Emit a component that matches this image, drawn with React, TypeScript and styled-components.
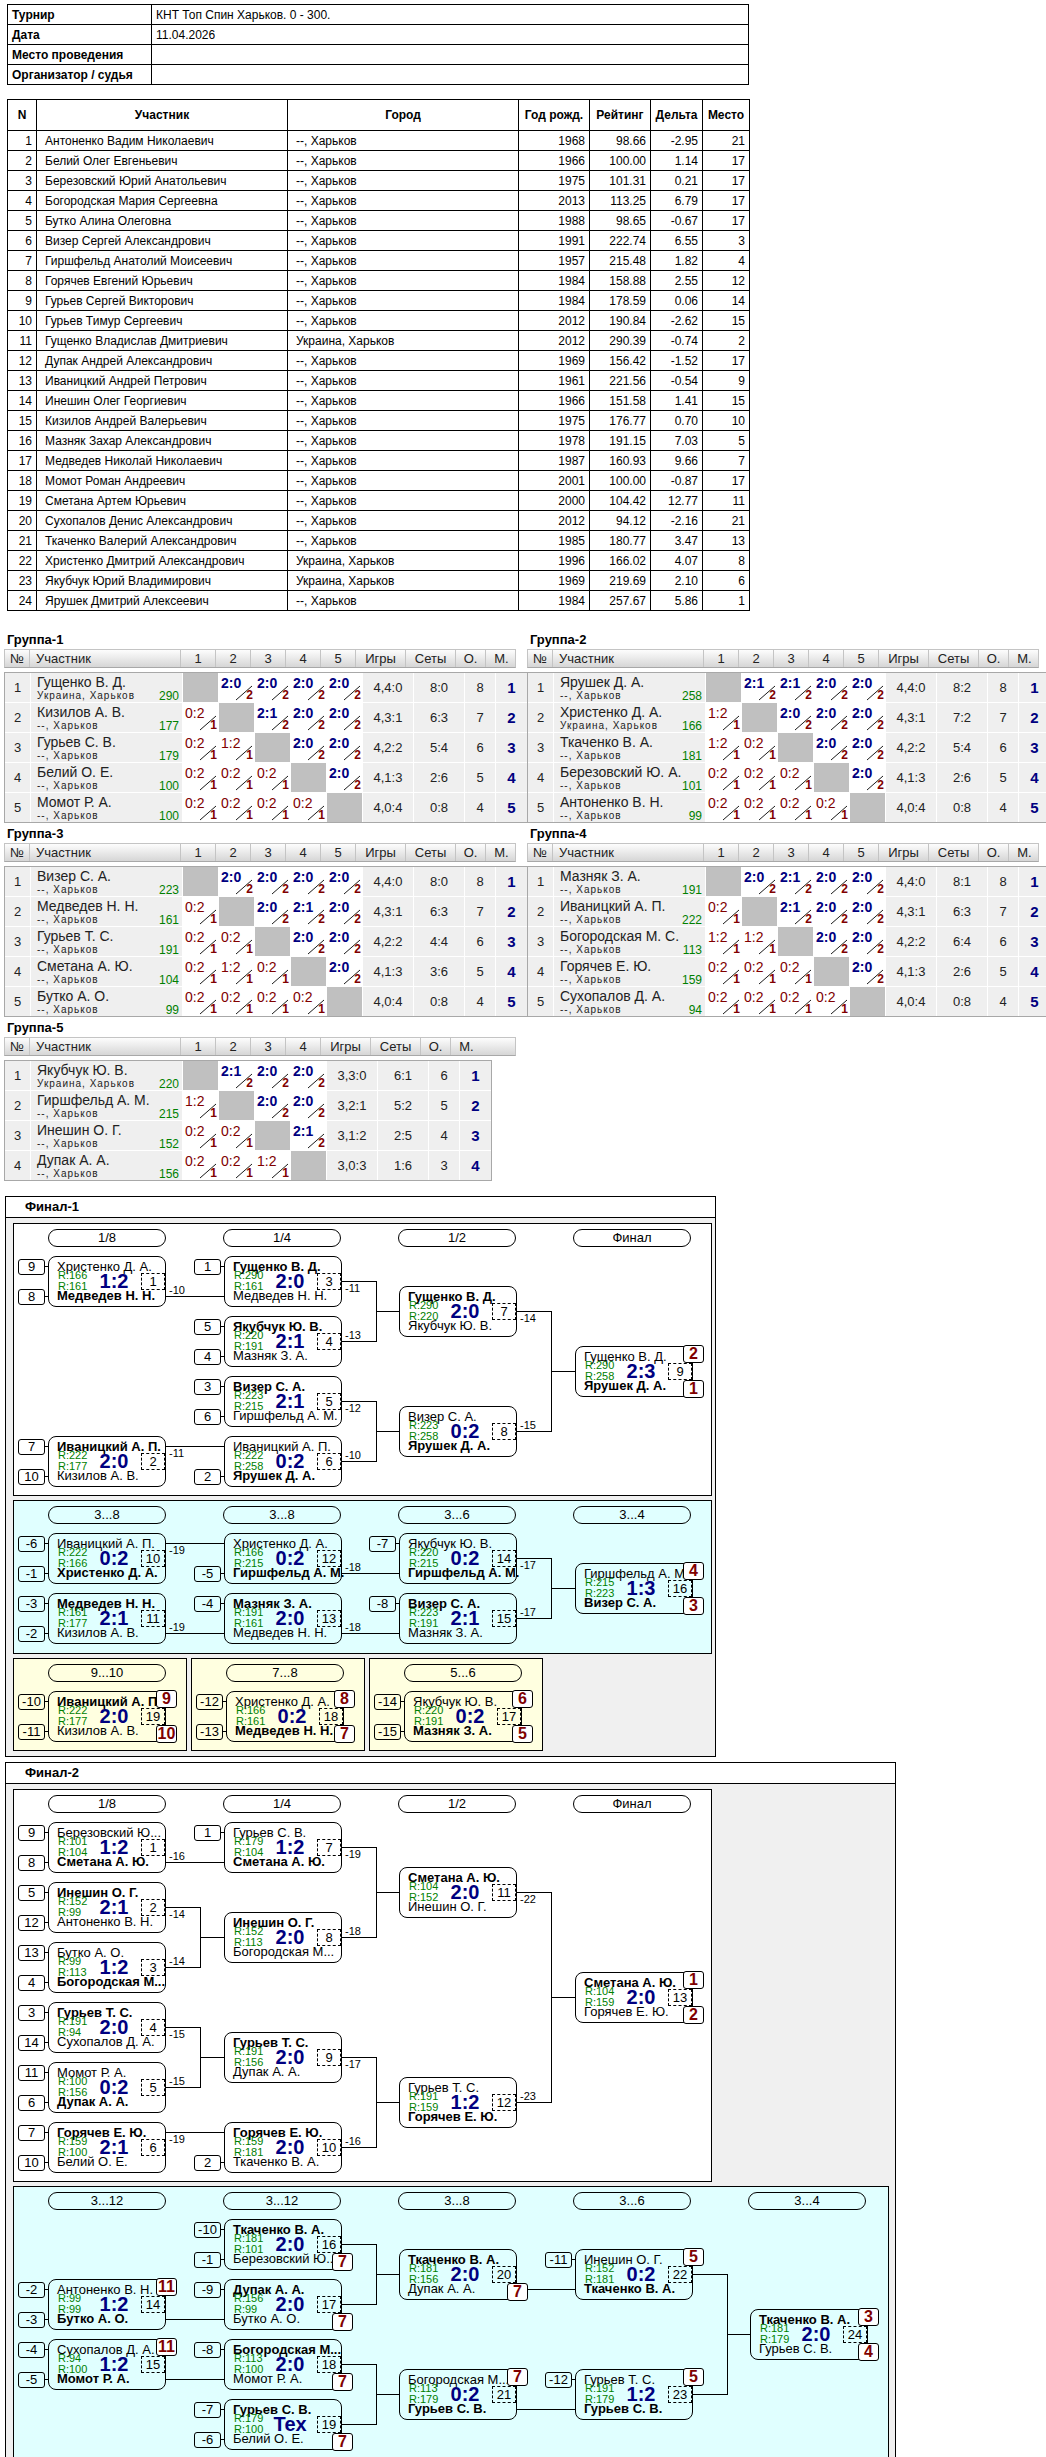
import React from 'react';
import styled, { createGlobalStyle } from 'styled-components';

const GlobalStyle = createGlobalStyle`
  body {
    margin: 0;
    background: #fff;
    font-family: 'Liberation Sans', Arial, sans-serif;
    color: #000;
  }
`;

const Page = styled.div`
  width: 1046px;
  padding: 4px 0 6px 4px;
  box-sizing: border-box;
`;

/* ---------- info + participants ---------- */

const Sheet = styled.table`
  margin-left: 3px;
  width: 742px;
  border-collapse: collapse;
  font-size: 12px;
  table-layout: fixed;
  td,
  th {
    border: 1px solid #000;
    padding: 0 4px;
    height: 19px;
    white-space: nowrap;
    overflow: hidden;
  }
`;
const InfoLabel = styled.td`
  font-weight: bold;
  width: 135px;
`;
const Participants = styled(Sheet)`
  margin-top: 14px;
  th {
    height: 30px;
    font-weight: bold;
    text-align: center;
  }
`;
const Cell = styled.td<{ $right?: boolean }>`
  text-align: ${(p) => (p.$right ? 'right' : 'left')};
  && {
    padding-left: ${(p) => (p.$right ? '4px' : '8px')};
  }
`;

const players: [string, string, string, string, string, string][] = [
  ['Антоненко Вадим Николаевич', '--, Харьков', '1968', '98.66', '-2.95', '21'],
  ['Белий Олег Евгеньевич', '--, Харьков', '1966', '100.00', '1.14', '17'],
  ['Березовский Юрий Анатольевич', '--, Харьков', '1975', '101.31', '0.21', '17'],
  ['Богородская Мария Сергеевна', '--, Харьков', '2013', '113.25', '6.79', '17'],
  ['Бутко Алина Олеговна', '--, Харьков', '1988', '98.65', '-0.67', '17'],
  ['Визер Сергей Александрович', '--, Харьков', '1991', '222.74', '6.55', '3'],
  ['Гиршфельд Анатолий Моисеевич', '--, Харьков', '1957', '215.48', '1.82', '4'],
  ['Горячев Евгений Юрьевич', '--, Харьков', '1984', '158.88', '2.55', '12'],
  ['Гурьев Сергей Викторович', '--, Харьков', '1984', '178.59', '0.06', '14'],
  ['Гурьев Тимур Сергеевич', '--, Харьков', '2012', '190.84', '-2.62', '15'],
  ['Гущенко Владислав Дмитриевич', 'Украина, Харьков', '2012', '290.39', '-0.74', '2'],
  ['Дупак Андрей Александрович', '--, Харьков', '1969', '156.42', '-1.52', '17'],
  ['Иваницкий Андрей Петрович', '--, Харьков', '1961', '221.56', '-0.54', '9'],
  ['Инешин Олег Георгиевич', '--, Харьков', '1966', '151.58', '1.41', '15'],
  ['Кизилов Андрей Валерьевич', '--, Харьков', '1975', '176.77', '0.70', '10'],
  ['Мазняк Захар Александрович', '--, Харьков', '1978', '191.15', '7.03', '5'],
  ['Медведев Николай Николаевич', '--, Харьков', '1987', '160.93', '9.66', '7'],
  ['Момот Роман Андреевич', '--, Харьков', '2001', '100.00', '-0.87', '17'],
  ['Сметана Артем Юрьевич', '--, Харьков', '2000', '104.42', '12.77', '11'],
  ['Сухопалов Денис Александрович', '--, Харьков', '2012', '94.12', '-2.16', '21'],
  ['Ткаченко Валерий Александрович', '--, Харьков', '1985', '180.77', '3.47', '13'],
  ['Христенко Дмитрий Александрович', 'Украина, Харьков', '1996', '166.02', '4.07', '8'],
  ['Якубчук Юрий Владимирович', 'Украина, Харьков', '1969', '219.69', '2.10', '6'],
  ['Ярушек Дмитрий Алексеевич', '--, Харьков', '1984', '257.67', '5.86', '1'],
];

/* ---------- groups ---------- */

const Groups = styled.div`
  margin-top: 20px;
  display: grid;
  grid-template-columns: 512px 512px;
  column-gap: 11px;
`;
const GroupBlock = styled.div`
  margin-bottom: 2px;
`;
const GroupTitle = styled.div`
  font-weight: bold;
  font-size: 13px;
  height: 18px;
  line-height: 18px;
  padding-left: 3px;
`;
const cols = (n: number) => `25px 151px repeat(${n}, 35px) 50px 50px 30px 31px`;
const GHead = styled.div<{ $n: number }>`
  display: grid;
  grid-template-columns: ${(p) => cols(p.$n)};
  height: 19px;
  margin-bottom: 4px;
  background: linear-gradient(#fdfdfd, #d6d6d6);
  border: 1px solid #c4c4c4;
  border-bottom-color: #a8a8a8;
  box-sizing: border-box;
  font-size: 13px;
  color: #222;
  & > div {
    border-right: 1px solid #c4c4c4;
    text-align: center;
    line-height: 17px;
  }
  & > div:nth-child(2) {
    text-align: left;
    padding-left: 6px;
  }
  & > div:last-child {
    border-right: none;
  }
`;
const GBody = styled.div<{ $n: number }>`
  display: grid;
  grid-template-columns: ${(p) => cols(p.$n)};
  grid-auto-rows: 29px;
  gap: 1px;
  background: #fff;
  border: 1px solid #a8a8a8;
  width: fit-content;
  font-size: 13px;
  color: #222;
`;
const GCell = styled.div`
  background: #efefef;
  display: flex;
  align-items: center;
  justify-content: center;
`;
const Place = styled(GCell)`
  color: #000080;
  font-weight: bold;
  font-size: 15px;
`;
const NameCell = styled.div`
  background: #efefef;
  display: grid;
  grid-template-columns: 1fr auto;
  grid-template-rows: 16px 12px;
  padding: 1px 3px 0 6px;
`;
const GName = styled.div`
  grid-column: 1 / 3;
  font-size: 14px;
  line-height: 16px;
  white-space: nowrap;
`;
const GCity = styled.div`
  font-size: 10px;
  letter-spacing: 1px;
  line-height: 12px;
  white-space: nowrap;
`;
const GRating = styled.div`
  font-size: 12px;
  line-height: 12px;
  color: #008000;
`;
const Diag = styled.div`
  background: #c0c0c0;
`;
const ScoreCell = styled.div`
  background: #fff;
  position: relative;
`;
const ScoreText = styled.span<{ $win: boolean }>`
  position: absolute;
  left: 2px;
  top: 2px;
  font-size: 14px;
  font-weight: ${(p) => (p.$win ? 'bold' : 'normal')};
  color: ${(p) => (p.$win ? '#000080' : '#800000')};
`;
const Points = styled.span`
  position: absolute;
  right: 1px;
  bottom: 0;
  font-size: 12px;
  font-weight: bold;
  color: #800000;
`;
const Slash = styled.svg`
  position: absolute;
  left: 0;
  top: 0;
`;

type GRow = [string, string, number, (string | null)[], string, string, number, number];
type Group = { title: string; rows: GRow[] };

const U = 'Украина, Харьков';
const K = '--, Харьков';
const g1: Group = {
  title: 'Группа-1',
  rows: [
    ['Гущенко В. Д.', U, 290, [null, '2:0', '2:0', '2:0', '2:0'], '4,4:0', '8:0', 8, 1],
    ['Кизилов А. В.', K, 177, ['0:2', null, '2:1', '2:0', '2:0'], '4,3:1', '6:3', 7, 2],
    ['Гурьев С. В.', K, 179, ['0:2', '1:2', null, '2:0', '2:0'], '4,2:2', '5:4', 6, 3],
    ['Белий О. Е.', K, 100, ['0:2', '0:2', '0:2', null, '2:0'], '4,1:3', '2:6', 5, 4],
    ['Момот Р. А.', K, 100, ['0:2', '0:2', '0:2', '0:2', null], '4,0:4', '0:8', 4, 5],
  ],
};
const g2: Group = {
  title: 'Группа-2',
  rows: [
    ['Ярушек Д. А.', K, 258, [null, '2:1', '2:1', '2:0', '2:0'], '4,4:0', '8:2', 8, 1],
    ['Христенко Д. А.', U, 166, ['1:2', null, '2:0', '2:0', '2:0'], '4,3:1', '7:2', 7, 2],
    ['Ткаченко В. А.', K, 181, ['1:2', '0:2', null, '2:0', '2:0'], '4,2:2', '5:4', 6, 3],
    ['Березовский Ю. А.', K, 101, ['0:2', '0:2', '0:2', null, '2:0'], '4,1:3', '2:6', 5, 4],
    ['Антоненко В. Н.', K, 99, ['0:2', '0:2', '0:2', '0:2', null], '4,0:4', '0:8', 4, 5],
  ],
};
const g3: Group = {
  title: 'Группа-3',
  rows: [
    ['Визер С. А.', K, 223, [null, '2:0', '2:0', '2:0', '2:0'], '4,4:0', '8:0', 8, 1],
    ['Медведев Н. Н.', K, 161, ['0:2', null, '2:0', '2:1', '2:0'], '4,3:1', '6:3', 7, 2],
    ['Гурьев Т. С.', K, 191, ['0:2', '0:2', null, '2:0', '2:0'], '4,2:2', '4:4', 6, 3],
    ['Сметана А. Ю.', K, 104, ['0:2', '1:2', '0:2', null, '2:0'], '4,1:3', '3:6', 5, 4],
    ['Бутко А. О.', K, 99, ['0:2', '0:2', '0:2', '0:2', null], '4,0:4', '0:8', 4, 5],
  ],
};
const g4: Group = {
  title: 'Группа-4',
  rows: [
    ['Мазняк З. А.', K, 191, [null, '2:0', '2:1', '2:0', '2:0'], '4,4:0', '8:1', 8, 1],
    ['Иваницкий А. П.', K, 222, ['0:2', null, '2:1', '2:0', '2:0'], '4,3:1', '6:3', 7, 2],
    ['Богородская М. С.', K, 113, ['1:2', '1:2', null, '2:0', '2:0'], '4,2:2', '6:4', 6, 3],
    ['Горячев Е. Ю.', K, 159, ['0:2', '0:2', '0:2', null, '2:0'], '4,1:3', '2:6', 5, 4],
    ['Сухопалов Д. А.', K, 94, ['0:2', '0:2', '0:2', '0:2', null], '4,0:4', '0:8', 4, 5],
  ],
};
const g5: Group = {
  title: 'Группа-5',
  rows: [
    ['Якубчук Ю. В.', U, 220, [null, '2:1', '2:0', '2:0'], '3,3:0', '6:1', 6, 1],
    ['Гиршфельд А. М.', K, 215, ['1:2', null, '2:0', '2:0'], '3,2:1', '5:2', 5, 2],
    ['Инешин О. Г.', K, 152, ['0:2', '0:2', null, '2:1'], '3,1:2', '2:5', 4, 3],
    ['Дупак А. А.', K, 156, ['0:2', '0:2', '1:2', null], '3,0:3', '1:6', 3, 4],
  ],
};

function GroupTable({ g }: { g: Group }) {
  const n = g.rows.length;
  return (
    <GroupBlock>
      <GroupTitle>{g.title}</GroupTitle>
      <GHead $n={n}>
        <div>№</div>
        <div>Участник</div>
        {g.rows.map((_, i) => (
          <div key={i}>{i + 1}</div>
        ))}
        <div>Игры</div>
        <div>Сеты</div>
        <div>О.</div>
        <div>М.</div>
      </GHead>
      <GBody $n={n}>
        {g.rows.map((r, i) => (
          <React.Fragment key={i}>
            <GCell>{i + 1}</GCell>
            <NameCell>
              <GName>{r[0]}</GName>
              <GCity>{r[1]}</GCity>
              <GRating>{r[2]}</GRating>
            </NameCell>
            {r[3].map((s, j) => {
              if (!s) return <Diag key={j} />;
              const [a, b] = s.split(':').map(Number);
              const win = a > b;
              return (
                <ScoreCell key={j}>
                  <Slash width="35" height="29">
                    <line x1="17" y1="27" x2="33" y2="13" stroke="#000" strokeWidth="0.9" />
                  </Slash>
                  <ScoreText $win={win}>{s}</ScoreText>
                  <Points>{win ? 2 : 1}</Points>
                </ScoreCell>
              );
            })}
            <GCell>{r[4]}</GCell>
            <GCell>{r[5]}</GCell>
            <GCell>{r[6]}</GCell>
            <Place>{r[7]}</Place>
          </React.Fragment>
        ))}
      </GBody>
    </GroupBlock>
  );
}

/* ---------- brackets ---------- */

type P = { n: string; r: number; b?: boolean };
type M = {
  c: number;
  y: number;
  t: P;
  d: P;
  s: string;
  no: number;
  lbl?: string;
  seeds?: [string, string];
  badges?: [string, string];
  to?: number;
  lv?: number;
};

const colX = (c: number) => 34 + Math.round(175.5 * c);

const FinalBox = styled.div<{ $w: number }>`
  margin-top: 13px;
  margin-left: 1px;
  width: ${(p) => p.$w}px;
  border: 1px solid #000;
  background: #f0f0f0;
  & + & {
    margin-top: 5px;
  }
`;
const FinalHead = styled.div`
  height: 20px;
  line-height: 20px;
  background: #fff;
  border-bottom: 1px solid #000;
  padding-left: 19px;
  font-weight: bold;
  font-size: 13px;
`;
const FinalBody = styled.div`
  padding: 5px 7px 5px 7px;
  display: flex;
  flex-direction: column;
  gap: 4px;
`;
const PanelRow = styled.div`
  display: flex;
  gap: 4px;
`;
const Panel = styled.div<{ $bg: string; $w: number; $h: number }>`
  position: relative;
  width: ${(p) => p.$w}px;
  height: ${(p) => p.$h}px;
  background: ${(p) => p.$bg};
  border: 1px solid #000;
  flex: none;
`;
const Pills = styled.div`
  display: flex;
  gap: 57px;
  padding: 5px 0 0 34px;
`;
const Pill = styled.div`
  width: 118px;
  height: 18px;
  box-sizing: border-box;
  border: 1px solid #000;
  border-radius: 9px;
  font-size: 13px;
  line-height: 16px;
  text-align: center;
`;
const Lines = styled.svg`
  position: absolute;
  left: 0;
  top: 0;
  pointer-events: none;
`;
const Node = styled.div<{ $x: number; $y: number }>`
  position: absolute;
  left: ${(p) => p.$x}px;
  top: ${(p) => p.$y}px;
  width: 118px;
  height: 51px;
  box-sizing: border-box;
  border: 1px solid #000;
  border-radius: 8px;
  font-size: 13px;
`;
const NName = styled.div<{ $b?: boolean; $top?: boolean }>`
  font-weight: ${(p) => (p.$b ? 'bold' : 'normal')};
  line-height: 14px;
  padding: ${(p) => (p.$top ? '3px' : '0')} 0 0 8px;
  margin-top: ${(p) => (p.$top ? '0' : '-3px')};
  white-space: nowrap;
`;
const NMid = styled.div`
  display: flex;
  align-items: center;
  margin-top: -4px;
  padding-left: 9px;
  height: 22px;
`;
const RCol = styled.div`
  width: 38px;
  font-size: 11px;
  line-height: 11px;
  color: #008000;
`;
const NScore = styled.div`
  width: 36px;
  text-align: center;
  font-size: 20px;
  font-weight: bold;
  color: #000080;
`;
const MatchNo = styled.div`
  position: absolute;
  left: 92px;
  top: 16px;
  width: 24px;
  height: 17px;
  box-sizing: border-box;
  border: 1px dashed #000;
  text-align: center;
  line-height: 15px;
  font-size: 13px;
`;
const Seed = styled.div<{ $bottom?: boolean }>`
  position: absolute;
  left: -31px;
  top: ${(p) => (p.$bottom ? '32px' : '2px')};
  width: 27px;
  height: 16px;
  box-sizing: border-box;
  border: 1px solid #000;
  border-radius: 3px;
  text-align: center;
  line-height: 14px;
  font-size: 13px;
  &::after {
    content: '';
    position: absolute;
    right: -5px;
    top: 6px;
    width: 4px;
    border-top: 1px solid #000;
  }
`;
const Badge = styled.div<{ $bottom?: boolean }>`
  position: absolute;
  left: 107px;
  top: ${(p) => (p.$bottom ? '33px' : '-2px')};
  width: 21px;
  height: 18px;
  box-sizing: border-box;
  border: 1px solid #000;
  border-radius: 3px;
  background: #fff;
  color: #800000;
  font-weight: bold;
  font-size: 16px;
  line-height: 16px;
  text-align: center;
`;
const Lbl = styled.div<{ $x: number; $y: number }>`
  position: absolute;
  left: ${(p) => p.$x}px;
  top: ${(p) => p.$y}px;
  font-size: 11px;
  line-height: 14px;
`;

function Match({ m }: { m: M }) {
  return (
    <Node $x={colX(m.c)} $y={32 + m.y}>
      {m.seeds?.[0] && <Seed>{m.seeds[0]}</Seed>}
      {m.seeds?.[1] && <Seed $bottom>{m.seeds[1]}</Seed>}
      <NName $top $b={m.t.b}>
        {m.t.n}
      </NName>
      <NMid>
        <RCol>
          R:{m.t.r}
          <br />
          R:{m.d.r}
        </RCol>
        <NScore>{m.s}</NScore>
      </NMid>
      <NName $b={m.d.b}>{m.d.n}</NName>
      <MatchNo>{m.no}</MatchNo>
      {m.badges?.[0] && <Badge>{m.badges[0]}</Badge>}
      {m.badges?.[1] && <Badge $bottom>{m.badges[1]}</Badge>}
    </Node>
  );
}

function Bracket({ pills, ms, bg, w, h }: { pills: string[]; ms: M[]; bg: string; w: number; h: number }) {
  const segs: string[] = [];
  const lbls: { x: number; y: number; t: string }[] = [];
  ms.forEach((t, ti) => {
    const f = ms.filter((m) => m.to === ti);
    const tx = colX(t.c);
    if (f.length === 1) {
      const m = f[0];
      const y = 32 + m.y + (m.lv ?? 40) + 0.5;
      segs.push(`M${colX(m.c) + 118} ${y}H${tx}`);
      if (m.lbl) lbls.push({ x: colX(m.c) + 121, y: 32 + m.y + (m.lv === 10 ? 17 : 34) - 7, t: m.lbl });
    } else if (f.length === 2) {
      const xm = colX(f[0].c) + 118 + 34 + 0.5;
      const ys = f.map((m) => 32 + m.y + 25 + 0.5);
      f.forEach((m, i) => {
        segs.push(`M${colX(m.c) + 118} ${ys[i]}H${xm}`);
        if (m.lbl) lbls.push({ x: colX(m.c) + 121, y: 32 + m.y + (i === 0 ? 32 : 19) - 7, t: m.lbl });
      });
      segs.push(`M${xm} ${ys[0]}V${ys[1]}M${xm} ${32 + t.y + 25.5}H${tx}`);
    }
  });
  return (
    <Panel $bg={bg} $w={w} $h={h}>
      <Pills>
        {pills.map((p, i) => (
          <Pill key={i}>{p}</Pill>
        ))}
      </Pills>
      <Lines width={w - 2} height={h - 2}>
        <path d={segs.join('')} stroke="#000" strokeWidth="1" fill="none" shapeRendering="crispEdges" />
      </Lines>
      {lbls.map((l, i) => (
        <Lbl key={i} $x={l.x} $y={l.y}>
          {l.t}
        </Lbl>
      ))}
      {ms.map((m, i) => (
        <Match key={i} m={m} />
      ))}
    </Panel>
  );
}

const p = (n: string, r: number, b?: boolean): P => ({ n, r, b });

const f1main: M[] = [
  { c: 0, y: 0, seeds: ['9', '8'], t: p('Христенко Д. А.', 166), d: p('Медведев Н. Н.', 161, true), s: '1:2', no: 1, lbl: '-10', to: 2, lv: 40 },
  { c: 0, y: 180, seeds: ['7', '10'], t: p('Иваницкий А. П.', 222, true), d: p('Кизилов А. В.', 177), s: '2:0', no: 2, lbl: '-11', to: 5, lv: 10 },
  { c: 1, y: 0, seeds: ['1', ''], t: p('Гущенко В. Д.', 290, true), d: p('Медведев Н. Н.', 161), s: '2:0', no: 3, lbl: '-11', to: 6 },
  { c: 1, y: 60, seeds: ['5', '4'], t: p('Якубчук Ю. В.', 220, true), d: p('Мазняк З. А.', 191), s: '2:1', no: 4, lbl: '-13', to: 6 },
  { c: 1, y: 120, seeds: ['3', '6'], t: p('Визер С. А.', 223, true), d: p('Гиршфельд А. М.', 215), s: '2:1', no: 5, lbl: '-12', to: 7 },
  { c: 1, y: 180, seeds: ['', '2'], t: p('Иваницкий А. П.', 222), d: p('Ярушек Д. А.', 258, true), s: '0:2', no: 6, lbl: '-10', to: 7 },
  { c: 2, y: 30, t: p('Гущенко В. Д.', 290, true), d: p('Якубчук Ю. В.', 220), s: '2:0', no: 7, lbl: '-14', to: 8 },
  { c: 2, y: 150, t: p('Визер С. А.', 223), d: p('Ярушек Д. А.', 258, true), s: '0:2', no: 8, lbl: '-15', to: 8 },
  { c: 3, y: 90, t: p('Гущенко В. Д.', 290), d: p('Ярушек Д. А.', 258, true), s: '2:3', no: 9, badges: ['2', '1'] },
];
const f1cons: M[] = [
  { c: 0, y: 0, seeds: ['-6', '-1'], t: p('Иваницкий А. П.', 222), d: p('Христенко Д. А.', 166, true), s: '0:2', no: 10, lbl: '-19', to: 2, lv: 10 },
  { c: 0, y: 60, seeds: ['-3', '-2'], t: p('Медведев Н. Н.', 161, true), d: p('Кизилов А. В.', 177), s: '2:1', no: 11, lbl: '-19', to: 3, lv: 40 },
  { c: 1, y: 0, seeds: ['', '-5'], t: p('Христенко Д. А.', 166), d: p('Гиршфельд А. М.', 215, true), s: '0:2', no: 12, lbl: '-18', to: 4, lv: 40 },
  { c: 1, y: 60, seeds: ['-4', ''], t: p('Мазняк З. А.', 191, true), d: p('Медведев Н. Н.', 161), s: '2:0', no: 13, lbl: '-18', to: 5, lv: 40 },
  { c: 2, y: 0, seeds: ['-7', ''], t: p('Якубчук Ю. В.', 220), d: p('Гиршфельд А. М.', 215, true), s: '0:2', no: 14, lbl: '-17', to: 6 },
  { c: 2, y: 60, seeds: ['-8', ''], t: p('Визер С. А.', 223, true), d: p('Мазняк З. А.', 191), s: '2:1', no: 15, lbl: '-17', to: 6 },
  { c: 3, y: 30, t: p('Гиршфельд А. М.', 215), d: p('Визер С. А.', 223, true), s: '1:3', no: 16, badges: ['4', '3'] },
];
const f1small: { title: string; m: M }[] = [
  { title: '9...10', m: { c: 0, y: 0, seeds: ['-10', '-11'], t: p('Иваницкий А. П.', 222, true), d: p('Кизилов А. В.', 177), s: '2:0', no: 19, badges: ['9', '10'] } },
  { title: '7...8', m: { c: 0, y: 0, seeds: ['-12', '-13'], t: p('Христенко Д. А.', 166), d: p('Медведев Н. Н.', 161, true), s: '0:2', no: 18, badges: ['8', '7'] } },
  { title: '5...6', m: { c: 0, y: 0, seeds: ['-14', '-15'], t: p('Якубчук Ю. В.', 220), d: p('Мазняк З. А.', 191, true), s: '0:2', no: 17, badges: ['6', '5'] } },
];
const f2main: M[] = [
  { c: 0, y: 0, seeds: ['9', '8'], t: p('Березовский Ю...', 101), d: p('Сметана А. Ю.', 104, true), s: '1:2', no: 1, lbl: '-16', to: 6, lv: 40 },
  { c: 0, y: 60, seeds: ['5', '12'], t: p('Инешин О. Г.', 152, true), d: p('Антоненко В. Н.', 99), s: '2:1', no: 2, lbl: '-14', to: 7 },
  { c: 0, y: 120, seeds: ['13', '4'], t: p('Бутко А. О.', 99), d: p('Богородская М...', 113, true), s: '1:2', no: 3, lbl: '-14', to: 7 },
  { c: 0, y: 180, seeds: ['3', '14'], t: p('Гурьев Т. С.', 191, true), d: p('Сухопалов Д. А.', 94), s: '2:0', no: 4, lbl: '-15', to: 8 },
  { c: 0, y: 240, seeds: ['11', '6'], t: p('Момот Р. А.', 100), d: p('Дупак А. А.', 156, true), s: '0:2', no: 5, lbl: '-15', to: 8 },
  { c: 0, y: 300, seeds: ['7', '10'], t: p('Горячев Е. Ю.', 159, true), d: p('Белий О. Е.', 100), s: '2:1', no: 6, lbl: '-19', to: 9, lv: 10 },
  { c: 1, y: 0, seeds: ['1', ''], t: p('Гурьев С. В.', 179), d: p('Сметана А. Ю.', 104, true), s: '1:2', no: 7, lbl: '-19', to: 10 },
  { c: 1, y: 90, t: p('Инешин О. Г.', 152, true), d: p('Богородская М...', 113), s: '2:0', no: 8, lbl: '-18', to: 10 },
  { c: 1, y: 210, t: p('Гурьев Т. С.', 191, true), d: p('Дупак А. А.', 156), s: '2:0', no: 9, lbl: '-17', to: 11 },
  { c: 1, y: 300, seeds: ['', '2'], t: p('Горячев Е. Ю.', 159, true), d: p('Ткаченко В. А.', 181), s: '2:0', no: 10, lbl: '-16', to: 11 },
  { c: 2, y: 45, t: p('Сметана А. Ю.', 104, true), d: p('Инешин О. Г.', 152), s: '2:0', no: 11, lbl: '-22', to: 12 },
  { c: 2, y: 255, t: p('Гурьев Т. С.', 191), d: p('Горячев Е. Ю.', 159, true), s: '1:2', no: 12, lbl: '-23', to: 12 },
  { c: 3, y: 150, t: p('Сметана А. Ю.', 104, true), d: p('Горячев Е. Ю.', 159), s: '2:0', no: 13, badges: ['1', '2'] },
];
const f2cons: M[] = [
  { c: 0, y: 60, seeds: ['-2', '-3'], t: p('Антоненко В. Н.', 99), d: p('Бутко А. О.', 99, true), s: '1:2', no: 14, badges: ['11', ''], to: 3, lv: 40 },
  { c: 0, y: 120, seeds: ['-4', '-5'], t: p('Сухопалов Д. А.', 94), d: p('Момот Р. А.', 100, true), s: '1:2', no: 15, badges: ['11', ''], to: 4, lv: 40 },
  { c: 1, y: 0, seeds: ['-10', '-1'], t: p('Ткаченко В. А.', 181, true), d: p('Березовский Ю...', 101), s: '2:0', no: 16, badges: ['', '7'], to: 6 },
  { c: 1, y: 60, seeds: ['-9', ''], t: p('Дупак А. А.', 156, true), d: p('Бутко А. О.', 99), s: '2:0', no: 17, badges: ['', '7'], to: 6 },
  { c: 1, y: 120, seeds: ['-8', ''], t: p('Богородская М...', 113, true), d: p('Момот Р. А.', 100), s: '2:0', no: 18, badges: ['', '7'], to: 7 },
  { c: 1, y: 180, seeds: ['-7', '-6'], t: p('Гурьев С. В.', 179, true), d: p('Белий О. Е.', 100), s: 'Тех', no: 19, badges: ['', '7'], to: 7 },
  { c: 2, y: 30, t: p('Ткаченко В. А.', 181, true), d: p('Дупак А. А.', 156), s: '2:0', no: 20, badges: ['', '7'], to: 8, lv: 40 },
  { c: 2, y: 150, t: p('Богородская М...', 113), d: p('Гурьев С. В.', 179, true), s: '0:2', no: 21, badges: ['7', ''], to: 9, lv: 40 },
  { c: 3, y: 30, seeds: ['-11', ''], t: p('Инешин О. Г.', 152), d: p('Ткаченко В. А.', 181, true), s: '0:2', no: 22, badges: ['5', ''], to: 10 },
  { c: 3, y: 150, seeds: ['-12', ''], t: p('Гурьев Т. С.', 191), d: p('Гурьев С. В.', 179, true), s: '1:2', no: 23, badges: ['5', ''], to: 10 },
  { c: 4, y: 90, t: p('Ткаченко В. А.', 181, true), d: p('Гурьев С. В.', 179), s: '2:0', no: 24, badges: ['3', '4'] },
];

const WHITE = '#fff';
const CYAN = '#e0ffff';
const YELLOW = '#ffffe0';

export default function App() {
  return (
    <Page>
      <GlobalStyle />
      <Sheet>
        <tbody>
          <tr>
            <InfoLabel>Турнир</InfoLabel>
            <td>КНТ Топ Спин Харьков. 0 - 300.</td>
          </tr>
          <tr>
            <InfoLabel>Дата</InfoLabel>
            <td>11.04.2026</td>
          </tr>
          <tr>
            <InfoLabel>Место проведения</InfoLabel>
            <td></td>
          </tr>
          <tr>
            <InfoLabel>Организатор / судья</InfoLabel>
            <td></td>
          </tr>
        </tbody>
      </Sheet>
      <Participants>
        <colgroup>
          <col style={{ width: 29 }} />
          <col style={{ width: 251 }} />
          <col style={{ width: 231 }} />
          <col style={{ width: 71 }} />
          <col style={{ width: 61 }} />
          <col style={{ width: 52 }} />
          <col style={{ width: 47 }} />
        </colgroup>
        <thead>
          <tr>
            <th>N</th>
            <th>Участник</th>
            <th>Город</th>
            <th>Год рожд.</th>
            <th>Рейтинг</th>
            <th>Дельта</th>
            <th>Место</th>
          </tr>
        </thead>
        <tbody>
          {players.map((r, i) => (
            <tr key={i}>
              <Cell $right>{i + 1}</Cell>
              <Cell>{r[0]}</Cell>
              <Cell>{r[1]}</Cell>
              <Cell $right>{r[2]}</Cell>
              <Cell $right>{r[3]}</Cell>
              <Cell $right>{r[4]}</Cell>
              <Cell $right>{r[5]}</Cell>
            </tr>
          ))}
        </tbody>
      </Participants>
      <Groups>
        <GroupTable g={g1} />
        <GroupTable g={g2} />
        <GroupTable g={g3} />
        <GroupTable g={g4} />
        <GroupTable g={g5} />
      </Groups>
      <FinalBox $w={709}>
        <FinalHead>Финал-1</FinalHead>
        <FinalBody>
          <Bracket pills={['1/8', '1/4', '1/2', 'Финал']} ms={f1main} bg={WHITE} w={697} h={271} />
          <Bracket pills={['3...8', '3...8', '3...6', '3...4']} ms={f1cons} bg={CYAN} w={697} h={152} />
          <PanelRow>
            {f1small.map((s, i) => (
              <Bracket key={i} pills={[s.title]} ms={[s.m]} bg={YELLOW} w={172} h={91} />
            ))}
          </PanelRow>
        </FinalBody>
      </FinalBox>
      <FinalBox $w={889}>
        <FinalHead>Финал-2</FinalHead>
        <FinalBody>
          <Bracket pills={['1/8', '1/4', '1/2', 'Финал']} ms={f2main} bg={WHITE} w={697} h={391} />
          <Bracket pills={['3...12', '3...12', '3...8', '3...6', '3...4']} ms={f2cons} bg={CYAN} w={874} h={271} />
        </FinalBody>
      </FinalBox>
    </Page>
  );
}
